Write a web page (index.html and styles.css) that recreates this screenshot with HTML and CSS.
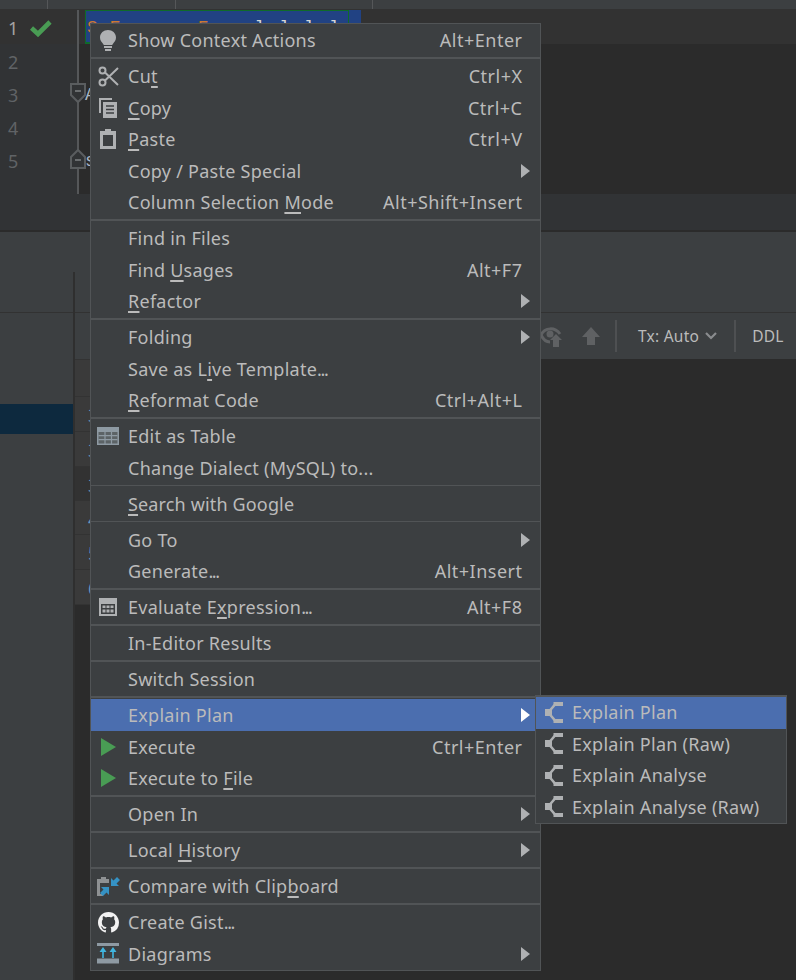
FILE: index.html
```html
<!DOCTYPE html>
<html lang="en">
<head>
<meta charset="utf-8">
<title>Editor context menu</title>
<link rel="stylesheet" href="styles.css">
</head>
<body>
<svg class="defs" width="0" height="0" aria-hidden="true">
  <symbol id="i-explain" viewBox="0 0 18 21">
    <rect x="0" y="7" width="7" height="7" />
    <rect x="8.5" y="0" width="9.5" height="4" />
    <rect x="8.5" y="17" width="9.5" height="4" />
    <path d="M4.5 9 L10 2.5 M4.5 12 L10 18.5" stroke="#afb1b3" stroke-width="2.6" fill="none"/>
  </symbol>
  <symbol id="i-play" viewBox="0 0 16 18">
    <path d="M1 0 L16 9 L1 18 Z" />
  </symbol>
</svg>
<div class="app">
  <header class="topbar"><i class="tick t1"></i><i class="tick t2"></i><i class="tick t3"></i></header>

  <section class="editor">
    <div class="line caret">
      <div class="gutter"><span class="num cur">1</span>
        <svg class="check" width="22" height="18" viewBox="0 0 22 18"><path d="M1.5 9 L8 15 L20 3" fill="none" stroke="#499c54" stroke-width="4.6"/></svg>
      </div>
      <div class="fold"></div>
      <div class="sel"><div class="hit"><span class="kw">S</span><span class="kw gapA">E</span><span class="kw gapB">F</span><span class="id gapC">l</span><span class="id gapD">l</span><span class="id gapE">l</span><span class="id gapF">l</span></div></div>
    </div>
    <div class="line"><div class="gutter"><span class="num">2</span></div><div class="fold"></div></div>
    <div class="line">
      <div class="gutter"><span class="num">3</span></div><div class="fold"></div><span class="code">A</span>
      <svg class="marker" width="18" height="22" viewBox="0 0 18 22"><path d="M2 2 H16 V13 L9 20 L2 13 Z" fill="#313335" stroke="#5a5d5f" stroke-width="2"/><path d="M6 9 H12" stroke="#6a6d6f" stroke-width="2"/></svg>
    </div>
    <div class="line"><div class="gutter"><span class="num">4</span></div><div class="fold"></div></div>
    <div class="line">
      <div class="gutter"><span class="num">5</span></div><div class="fold"></div><span class="code">s</span>
      <svg class="marker" width="18" height="22" viewBox="0 0 18 22"><path d="M2 20 H16 V9 L9 2 L2 9 Z" fill="#313335" stroke="#5a5d5f" stroke-width="2"/><path d="M6 12 H12" stroke="#6a6d6f" stroke-width="2"/></svg>
    </div>
  </section>

  <div class="strip"></div>

  <section class="panel">
    <div class="panel-head"></div>
    <div class="panel-body">
      <div class="tree">
        <div class="tree-head"></div>
        <div class="tree-blank"></div>
        <div class="tree-selected"></div>
      </div>
      <div class="results">
        <div class="res-head"></div>
        <div class="toolbar">
          <svg class="tool-eye" width="24" height="24" viewBox="0 0 24 24"><path d="M2 11 C6 3 16 3 21 10" fill="none" stroke="#5f6163" stroke-width="3"/><path d="M2 11 C4 15 7 18 11 18" fill="none" stroke="#5f6163" stroke-width="3"/><circle cx="11" cy="10" r="3.5" fill="#5f6163"/><path d="M17 10 L23 16 H20 V23 H14 V16 H11 Z" fill="#5f6163"/></svg>
          <svg class="tool-up" width="20" height="20" viewBox="0 0 20 20"><path d="M10 1 L19 11 H14 V19 H6 V11 H1 Z" fill="#5f6163"/></svg>
          <i class="tool-sep"></i>
          <span class="tool-text tx">Tx: Auto</span>
          <svg class="tool-chev" width="14" height="10" viewBox="0 0 14 10"><path d="M2 2 L7 7 L12 2" fill="none" stroke="#8a8c8e" stroke-width="2.2"/></svg>
          <i class="tool-sep sep2"></i>
          <span class="tool-text">DDL</span>
        </div>
        <div class="grid">
          <div class="cell head"></div>
          <div class="cell"><b>3</b></div>
          <div class="cell"><b>3</b></div>
          <div class="cell alt short"><b>3</b></div>
          <div class="cell short"><b>4</b></div>
          <div class="cell"><b>5</b></div>
          <div class="cell"><b>6</b></div>
        </div>
      </div>
    </div>
  </section>

  <nav class="menu main-menu">
    <div class="item"><span class="ico"><svg width="16" height="21" viewBox="0 0 16 21"><path class="g" d="M8 0 C3.6 0 0 3.2 0 7.4 C0 10.2 1.6 11.8 2.8 13.4 L3.8 15 H12.2 L13.2 13.4 C14.4 11.8 16 10.2 16 7.4 C16 3.2 12.4 0 8 0 Z"/><rect class="g" x="4" y="16" width="8" height="2"/><rect class="g" x="5" y="19" width="6" height="2"/></svg></span><span>Show Context Actions</span><span class="key">Alt+Enter</span></div>
    <div class="sep"></div>
    <div class="item"><span class="ico"><svg width="21" height="21" viewBox="0 0 21 21" class="st"><circle cx="4.5" cy="4.5" r="3"/><circle cx="4.5" cy="16.5" r="3"/><path d="M7 6.5 L20 19 M7 14.5 L20 2"/></svg></span><span>Cu<u>t</u></span><span class="key">Ctrl+X</span></div>
    <div class="item"><span class="ico"><svg width="19" height="20" viewBox="0 0 19 20"><path class="g" d="M0 0 H13 V2 H2 V15 H0 Z"/><path class="g" d="M4 4 H18 V20 H4 Z"/><path d="M7 8 H15 M7 11.5 H15 M7 15 H15" stroke="#3c3f41" stroke-width="1.6"/></svg></span><span><u>C</u>opy</span><span class="key">Ctrl+C</span></div>
    <div class="item"><span class="ico"><svg width="16" height="20" viewBox="0 0 16 20"><path class="g" fill-rule="evenodd" d="M0 2 H5 V0 H11 V2 H16 V20 H0 Z M3 6 V17 H13 V6 Z"/></svg></span><span><u>P</u>aste</span><span class="key">Ctrl+V</span></div>
    <div class="item"><span class="ico"></span><span>Copy / Paste Special</span><i class="arrow"></i></div>
    <div class="item"><span class="ico"></span><span>Column Selection <u>M</u>ode</span><span class="key">Alt+Shift+Insert</span></div>
    <div class="sep"></div>
    <div class="item"><span class="ico"></span><span>Find in Files</span></div>
    <div class="item"><span class="ico"></span><span>Find <u>U</u>sages</span><span class="key">Alt+F7</span></div>
    <div class="item"><span class="ico"></span><span><u>R</u>efactor</span><i class="arrow"></i></div>
    <div class="sep"></div>
    <div class="item"><span class="ico"></span><span>Folding</span><i class="arrow"></i></div>
    <div class="item"><span class="ico"></span><span>Save as L<u>i</u>ve Template<span class="dots">...</span></span></div>
    <div class="item"><span class="ico"></span><span><u>R</u>eformat Code</span><span class="key">Ctrl+Alt+L</span></div>
    <div class="sep"></div>
    <div class="item"><span class="ico"><svg width="22" height="18" viewBox="0 0 22 18"><rect width="22" height="18" fill="#8e9aa3"/><path d="M1.5 5 H20.5 V16.5 H1.5 Z" fill="#5c6366"/><path d="M1.5 8.6 H20.5 M1.5 12.6 H20.5" stroke="#8e9aa3" stroke-width="1.2"/><path d="M8 5 V17 M14.5 5 V17" stroke="#8e9aa3" stroke-width="1.2"/></svg></span><span>Edit as Table</span></div>
    <div class="item"><span class="ico"></span><span>Change Dialect (MySQL) to...</span></div>
    <div class="sep thin"></div>
    <div class="item"><span class="ico"></span><span class="tight"><u>S</u>earch with Google</span></div>
    <div class="sep thin"></div>
    <div class="item"><span class="ico"></span><span>Go To</span><i class="arrow"></i></div>
    <div class="item"><span class="ico"></span><span>Generate<span class="dots">...</span></span><span class="key">Alt+Insert</span></div>
    <div class="sep"></div>
    <div class="item"><span class="ico"><svg width="18" height="18" viewBox="0 0 18 18"><rect class="g" width="18" height="18"/><rect x="2" y="6" width="14" height="10" fill="#3c3f41"/><path class="g" d="M3.5 7.5 H6.5 V10 H3.5 Z M7.5 7.5 H10.5 V10 H7.5 Z M11.5 7.5 H14.5 V10 H11.5 Z M3.5 11.5 H6.5 V14.5 H3.5 Z M7.5 11.5 H10.5 V14.5 H7.5 Z M11.5 11.5 H14.5 V14.5 H11.5 Z"/></svg></span><span>Evaluate E<u>x</u>pression<span class="dots">...</span></span><span class="key">Alt+F8</span></div>
    <div class="sep"></div>
    <div class="item"><span class="ico"></span><span>In-Editor Results</span></div>
    <div class="sep"></div>
    <div class="item"><span class="ico"></span><span>Switch Session</span></div>
    <div class="sep"></div>
    <div class="item active"><span class="ico"></span><span>Explain Plan</span><i class="arrow"></i></div>
    <div class="item"><span class="ico"><svg class="play" width="16" height="18"><use href="#i-play"/></svg></span><span>Execute</span><span class="key">Ctrl+Enter</span></div>
    <div class="item"><span class="ico"><svg class="play" width="16" height="18"><use href="#i-play"/></svg></span><span>Execute to <u>F</u>ile</span></div>
    <div class="sep"></div>
    <div class="item"><span class="ico"></span><span>Open In</span><i class="arrow"></i></div>
    <div class="sep"></div>
    <div class="item"><span class="ico"></span><span>Local <u>H</u>istory</span><i class="arrow"></i></div>
    <div class="sep"></div>
    <div class="item"><span class="ico"><svg width="23" height="21" viewBox="0 0 23 21"><path d="M0 3 H4 V1 H9 V3 H12 V7 H3 V18 H6 V20 H0 Z" fill="#8e9193"/><path d="M12 11 V19 L9.5 16.5 L6 20 L3 17 L6.5 13.5 L4 11 Z" fill="#3592c4"/><path d="M14 10 V2 L16.5 4.5 L20 1 L23 4 L19.5 7.5 L22 10 Z" fill="#3592c4"/></svg></span><span>Compare with Clip<u>b</u>oard</span></div>
    <div class="sep"></div>
    <div class="item"><span class="ico"><svg width="21" height="21" viewBox="0 0 16 16"><path fill="#f2f2f2" d="M8 0C3.58 0 0 3.58 0 8c0 3.54 2.29 6.53 5.47 7.59.4.07.55-.17.55-.38 0-.19-.01-.82-.01-1.49-2.01.37-2.53-.49-2.69-.94-.09-.23-.48-.94-.82-1.13-.28-.15-.68-.52-.01-.53.63-.01 1.08.58 1.23.82.72 1.21 1.87.87 2.33.66.07-.52.28-.87.51-1.07-1.78-.2-3.64-.89-3.64-3.95 0-.87.31-1.59.82-2.15-.08-.2-.36-1.02.08-2.12 0 0 .67-.21 2.2.82.64-.18 1.32-.27 2-.27.68 0 1.36.09 2 .27 1.53-1.04 2.2-.82 2.2-.82.44 1.1.16 1.92.08 2.12.51.56.82 1.27.82 2.15 0 3.07-1.87 3.75-3.65 3.95.29.25.54.73.54 1.48 0 1.07-.01 1.93-.01 2.2 0 .21.15.46.55.38A8.013 8.013 0 0016 8c0-4.42-3.58-8-8-8z"/></svg></span><span>Create Gist<span class="dots">...</span></span></div>
    <div class="item"><span class="ico"><svg width="22" height="21" viewBox="0 0 22 21"><rect width="22" height="3" fill="#8e9aa3"/><rect y="15.5" width="22" height="5" fill="#8e9aa3"/><path d="M6 4 L9.5 9 H6.8 V15 H5.2 V9 H2.5 Z M16 4 L19.5 9 H16.8 V15 H15.2 V9 H12.5 Z" fill="#40b6e0"/></svg></span><span>Diagrams</span><i class="arrow"></i></div>
  </nav>

  <nav class="menu sub-menu">
    <div class="item active"><span class="ico"><svg class="tree-ico" width="18" height="21"><use href="#i-explain"/></svg></span><span>Explain Plan</span></div>
    <div class="item"><span class="ico"><svg class="tree-ico" width="18" height="21"><use href="#i-explain"/></svg></span><span>Explain Plan (Raw)</span></div>
    <div class="item"><span class="ico"><svg class="tree-ico" width="18" height="21"><use href="#i-explain"/></svg></span><span>Explain Analyse</span></div>
    <div class="item"><span class="ico"><svg class="tree-ico" width="18" height="21"><use href="#i-explain"/></svg></span><span>Explain Analyse (Raw)</span></div>
  </nav>
</div>
</body>
</html>
```

FILE: styles.css
```css
* { box-sizing: border-box; }
html, body { margin: 0; padding: 0; background: #2b2b2b; }
body { width: 796px; height: 980px; overflow: hidden; font-family: "Noto Sans", "Open Sans", sans-serif; color: #bbbbbb; }
.defs { position: absolute; }
.app { position: relative; width: 796px; height: 980px; display: flex; flex-direction: column; background: #2b2b2b; overflow: hidden; }

/* top toolbar */
.topbar { height: 10px; flex: none; background: #3c3f41; border-bottom: 1px solid #323232; display: flex; }
.tick { width: 1px; height: 9px; background: #555759; display: block; }
.t1 { margin-left: 47px; }
.t2 { margin-left: 127px; }
.t3 { margin-left: 196px; }

/* editor */
.editor { height: 184px; flex: none; background: #2b2b2b; display: flex; flex-direction: column; padding-bottom: 19px; position: relative; }
.editor::before { content: ""; position: absolute; left: 0; top: 0; bottom: 0; width: 77px; background: #313335; }
.editor::after { content: ""; position: absolute; left: 77px; top: 0; bottom: 0; width: 2px; background: #555759; }
.line { height: 33px; display: flex; position: relative; flex: none; }
.caret { background: #323232; height: 34px; }
.gutter { width: 77px; flex: none; display: flex; align-items: center; padding: 2px 0 0 8px; position: relative; z-index: 1; }
.num { font-size: 18px; color: #606366; width: 10px; line-height: 1; }
.num.cur { color: #a4a3a3; }
.check { margin-left: 12px; }
.fold { width: 8px; flex: none; }
.sel { width: 276px; background: #214283; }
.hit { width: 264px; height: 100%; border: 1px solid #0f6b2a; border-bottom-width: 2px; display: flex; font: 18px/22px "Liberation Mono", monospace; padding: 6px 0 0 1px; overflow: hidden; }
.kw { color: #cc7832; }
.id { color: #d8d8d8; }
.gapA { margin-left: 12px; }
.gapB { margin-left: 77px; }
.gapC { margin-left: 46px; }
.gapD { margin-left: 14px; }
.gapE { margin-left: 14px; }
.gapF { margin-left: 14px; }
.code { font: 18px/33px "Liberation Mono", monospace; color: #a9b7c6; padding-top: 2px; margin-left: 0; }
.marker { position: absolute; left: 69px; top: 5px; z-index: 2; }

/* strip between editor and panel */
.strip { height: 38px; flex: none; background: #313335; border-bottom: 2px solid #2b2b2b; }

/* tool window */
.panel { flex: 1; min-height: 0; display: flex; flex-direction: column; background: #3c3f41; }
.panel-head { height: 40px; flex: none; }
.panel-body { flex: 1; min-height: 0; display: flex; }
.tree { width: 73px; flex: none; }
.tree-head { height: 41px; border-bottom: 1px solid #323232; }
.tree-blank { height: 91px; }
.tree-selected { height: 30px; background: #0d293e; }
.results { flex: 1; min-width: 0; border-left: 2px solid #2f2f2f; display: flex; flex-direction: column; }
.res-head { height: 41px; border-bottom: 1px solid #323232; flex: none; margin-left: 0; }
.toolbar { height: 46px; flex: none; display: flex; align-items: center; background: #3c3f41; padding-left: 466px; }
.tool-eye { margin-left: -2px; flex: none; }
.tool-up { margin-left: 18px; flex: none; }
.tool-sep { display: block; width: 2px; height: 32px; background: #4e5052; margin-left: 14px; flex: none; }
.sep2 { margin-left: 16px; }
.tool-text { font-size: 15.5px; letter-spacing: 0.25px; margin-left: 16px; color: #bbbbbb; }
.tx { margin-left: 21px; }
.tool-chev { margin-left: 5px; flex: none; }
.grid { flex: 1; background: #2b2b2b; display: flex; flex-direction: column; }
.cell { height: 35px; flex: none; background: #3a3a3a; border-bottom: 1px solid #333333; width: 15px; overflow: hidden; font: normal 18px/37px "Noto Sans", sans-serif; color: #6897bb; padding-left: 13px; }
.cell b { font-weight: 400; }
.cell.head { height: 38px; border-top: 1px solid #333333; }
.cell.short { height: 34px; }
.alt { background: #323232; }

/* menus */
.menu { position: absolute; background: #3c3f41; border: 1px solid #515456; font-size: 18px; letter-spacing: 0.26px; white-space: nowrap; z-index: 5; }
.main-menu { left: 90px; top: 23px; width: 451px; height: 948px; padding-top: 0.25px; }
.sub-menu { left: 535px; top: 695px; width: 252px; height: 129px; border-top-width: 2px; z-index: 6; }
.sub-menu .item { padding-bottom: 1px; }
.item { height: 31.5px; display: flex; align-items: center; padding-right: 17.5px; }
.item.active { background: #4b6eaf; }
.ico { width: 37px; flex: none; display: flex; justify-content: center; padding-right: 3px; }
.sub-menu .ico { width: 36px; padding-right: 0; }
.key { margin-left: auto; letter-spacing: 0.5px; }
.dots { letter-spacing: -1.4px; }
.tight { letter-spacing: 0.15px; }
.arrow { display: block; margin-left: auto; margin-right: -7px; width: 0; height: 0; border-left: 9px solid #afb1b3; border-top: 7px solid transparent; border-bottom: 7px solid transparent; }
.active .arrow { border-left-color: #ffffff; }
.sep { height: 4.5px; display: flex; align-items: center; }
.sep::before { content: ""; display: block; width: 100%; height: 2px; background: #515456; }
.sep.thin::before { height: 1px; }
u { text-decoration-thickness: 2px; text-underline-offset: 3px; text-decoration-skip-ink: none; }
.g { fill: #afb1b3; }
.st { fill: none; stroke: #afb1b3; stroke-width: 2; }
.play { fill: #499c54; }
.tree-ico { fill: #afb1b3; }
```
